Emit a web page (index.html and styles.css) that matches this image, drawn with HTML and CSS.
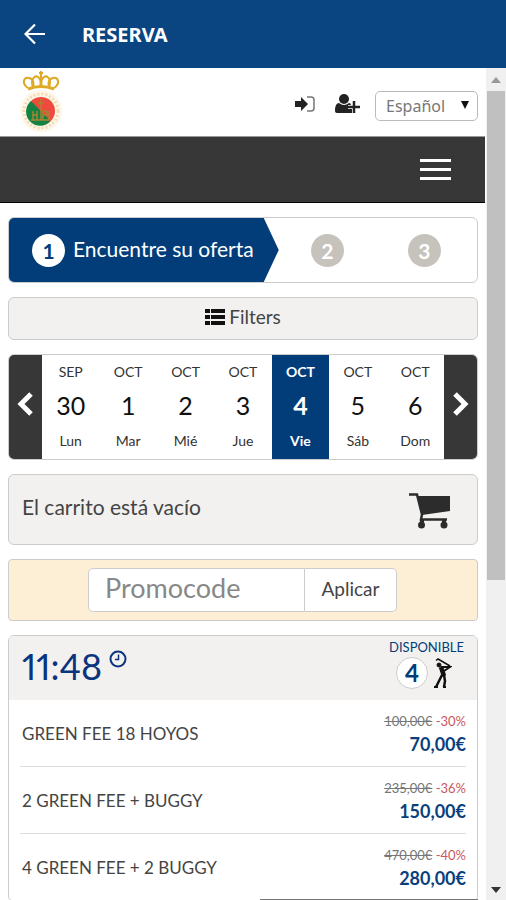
FILE: index.html
```html
<!DOCTYPE html>
<html lang="es">
<head>
    <meta charset="UTF-8">
    <meta name="viewport" content="width=device-width, initial-scale=1.0">
    <title>Reserva</title>
    <link rel="stylesheet" href="styles.css">
</head>
<body>
    <!-- App bar -->
    <header class="app-bar">
        <button class="back" aria-label="Volver">
            <svg width="22" height="22" viewBox="0 0 22 22" fill="none" stroke="currentColor" stroke-width="2.200"><path d="M21 11H2M11 1.500L1.500 11L11 20.500"/></svg>
        </button>
        <h1>RESERVA</h1>
    </header>

    <div class="view">
        <div class="page">
            <!-- Logo, login and language -->
            <div class="top">
                <a href="#" class="logo" aria-label="Inicio">
                    <svg width="42" height="62" viewBox="0 0 42 62">
                        <g fill="none" stroke="#dfaa23" stroke-width="2">
                            <path d="M8 17C1 12 4 6 9 7c5 1 5 6 4 9M34 17c7-5 4-11-1-10c-5 1-5 6-4 9"/>
                            <path d="M13 16C10 8 15 4 18 6c3 2 3 6 2 10M29 16c3-8-2-12-5-10c-3 2-3 6-2 10M21 0v15M19 2h4"/>
                            <path d="M8 18q13-5 26 0" stroke-width="3"/>
                        </g>
                        <circle cx="21" cy="40" r="21" fill="#fef7e8"/>
                        <circle cx="21" cy="40" r="17" fill="none" stroke="#f1dcb5" stroke-width="3" stroke-dasharray="2 2"/>
                        <circle cx="21" cy="40" r="14" fill="#ee4b3e"/>
                        <path d="M11 30A14 14 0 1 0 30.500 50Z" fill="#148243"/>
                        <path d="M21 28v21M18 32h6M13 40v9M17 40v9M13 44h4M23 49v-9h4v4h-4M29 40v9M11 49h19" fill="none" stroke="#a88432" stroke-width="1.500"/>
                    </svg>
                </a>
                <a href="#" class="top-link" aria-label="Entrar">
                    <svg width="20" height="16" viewBox="0 0 20 16"><path d="M0 5h6V1l7 7-7 7v-4H0Z" fill="#222"/><path d="M12 1h4q3 0 3 3v8q0 3-3 3h-4" fill="none" stroke="#777" stroke-width="1.500"/></svg>
                </a>
                <a href="#" class="top-link" aria-label="Registrarse">
                    <svg width="26" height="20" viewBox="0 0 26 20" fill="#222"><circle cx="9" cy="5" r="5"/><path d="M4 9q5 4 10 0q2 0 2 2v3h1v5H2q-2 0-2-2c0-4 1-8 4-8Z"/><path d="M19 6v13M13 13h12" stroke="#fff" stroke-width="4"/><path d="M19 7v12M13 13h12" stroke="#222" stroke-width="2.500"/></svg>
                </a>
                <div class="language">
                    <select aria-label="Idioma">
                        <option>Español</option>
                        <option>English</option>
                    </select>
                    <svg class="caret" width="8" height="8" viewBox="0 0 8 8"><path d="M0 0h8L4 8Z" fill="#111"/></svg>
                </div>
            </div>

            <nav class="menu">
                <button class="hamburger" aria-label="Menú"><span></span><span></span><span></span></button>
            </nav>

            <main class="content">
                <!-- Booking steps -->
                <div class="steps">
                    <div class="step active"><span class="circle">1</span><span class="step-text">Encuentre su oferta</span></div>
                    <div class="step"><span class="circle">2</span></div>
                    <div class="step"><span class="circle">3</span></div>
                </div>

                <button class="filters">
                    <svg width="20" height="16" viewBox="0 0 20 16" fill="#111"><path d="M0 0h5v4H0ZM0 6h5v4H0ZM0 12h5v4H0ZM6 0h14v4H6ZM6 6h14v4H6ZM6 12h14v4H6Z"/></svg>
                    Filters
                </button>

                <!-- Day picker -->
                <div class="days">
                    <button class="arrow" aria-label="Anterior"><svg width="18" height="26" viewBox="0 0 18 26"><path d="M14 3L4 13L14 23"/></svg></button>
                    <button class="day"><span>SEP</span><b>30</b><span>Lun</span></button>
                    <button class="day"><span>OCT</span><b>1</b><span>Mar</span></button>
                    <button class="day"><span>OCT</span><b>2</b><span>Mié</span></button>
                    <button class="day"><span>OCT</span><b>3</b><span>Jue</span></button>
                    <button class="day selected"><span>OCT</span><b>4</b><span>Vie</span></button>
                    <button class="day"><span>OCT</span><b>5</b><span>Sáb</span></button>
                    <button class="day"><span>OCT</span><b>6</b><span>Dom</span></button>
                    <button class="arrow" aria-label="Siguiente"><svg width="18" height="26" viewBox="0 0 18 26"><path d="M4 3L14 13L4 23"/></svg></button>
                </div>

                <div class="cart">
                    <span>El carrito está vacío</span>
                    <svg width="42" height="36" viewBox="0 0 42 36" fill="#2c2c2c"><path d="M8 3h33v15L13 22Z"/><path d="M0 1.500h8l5 20-1 5h26" fill="none" stroke="#2c2c2c" stroke-width="2.500"/><circle cx="12.500" cy="32" r="3.500"/><circle cx="35" cy="32" r="3.500"/><path d="M11 26h4v4h-4ZM33 26h4v4h-4Z"/></svg>
                </div>

                <form class="promo">
                    <input type="text" placeholder="Promocode" aria-label="Promocode">
                    <button type="button">Aplicar</button>
                </form>

                <!-- Tee time offer -->
                <section class="offer">
                    <div class="offer-head">
                        <h2>11:48
                            <svg width="18" height="18" viewBox="0 0 18 18" fill="none" stroke="currentColor"><circle cx="9" cy="9" r="7.500" stroke-width="2"/><path d="M9.500 4.500V9.500H6" stroke-width="1.500"/></svg>
                        </h2>
                        <div class="available">
                            <span>DISPONIBLE</span>
                            <div class="players">
                                <b>4</b>
                                <svg width="18" height="30" viewBox="0 0 18 30" fill="none" stroke="#111"><circle cx="5" cy="7" r="2" fill="#111"/><path d="M2 2.500L4 1L16 8" stroke-width="1.500"/><path d="M7 9L16 9L10 13" stroke-width="2"/><path d="M7 9L10 18" stroke-width="4.500"/><path d="M8 17L5 23L2 29M10 17L11 23L10 29" stroke-width="2.500"/><path d="M0 29h4M9 29h3" stroke-width="2"/></svg>
                            </div>
                        </div>
                    </div>
                    <ul class="rates">
                        <li><a href="#">GREEN FEE 18 HOYOS</a><div class="price"><small><s>100,00€</s> <em>-30%</em></small><strong>70,00€</strong></div></li>
                        <li><a href="#">2 GREEN FEE + BUGGY</a><div class="price"><small><s>235,00€</s> <em>-36%</em></small><strong>150,00€</strong></div></li>
                        <li><a href="#">4 GREEN FEE + 2 BUGGY</a><div class="price"><small><s>470,00€</s> <em>-40%</em></small><strong>280,00€</strong></div></li>
                    </ul>
                </section>
            </main>
            <div class="status-edge"></div>
        </div>

        <!-- Scroll bar -->
        <div class="scrollbar">
            <svg width="10" height="6" viewBox="0 0 10 6"><path d="M0 6L5 0L10 6Z" fill="#999"/></svg>
            <div class="track"><div class="thumb"></div></div>
            <svg width="10" height="6" viewBox="0 0 10 6"><path d="M0 0L5 6L10 0Z" fill="#333"/></svg>
        </div>
    </div>
</body>
</html>
```
FILE: styles.css
```css
* {
    box-sizing: border-box;
}
body {
    font-family: Lato, "Liberation Sans", sans-serif;
    margin: 0;
    height: 100vh;
    display: flex;
    flex-direction: column;
    overflow: hidden;
    background: white;
    color: #444;
}
button {
    font-family: inherit;
    color: inherit;
    border: none;
    padding: 0;
    background: none;
    cursor: pointer;
}
a {
    color: inherit;
    text-decoration: none;
}
svg {
    display: block;
}

/* App bar */
.app-bar {
    display: flex;
    flex: none;
    align-items: center;
    gap: 36px;
    height: 68px;
    padding: 0 24px;
    background: #0a4481;
    color: white;
}
.app-bar h1 {
    margin: 0;
    font: bold 20px "Noto Sans", sans-serif;
}
.view {
    display: flex;
    flex: 1;
    min-height: 0;
}
.page {
    position: relative;
    flex: 1;
    min-width: 0;
    overflow: hidden;
}

/* Top row */
.top {
    display: flex;
    align-items: center;
    height: 69px;
    padding: 4px 7px 4px 20px;
    border-bottom: 1px solid #999;
}
.logo {
    margin-right: auto;
}
.top-link {
    margin-top: 4px;
    margin-right: 20px;
}
.top-link + .top-link {
    margin-right: 14px;
}
.language {
    position: relative;
    margin-top: 7px;
}
.language select {
    appearance: none;
    width: 103px;
    height: 30px;
    padding: 0 10px;
    border: 1px solid #bbb;
    border-radius: 5px;
    background: white;
    color: #777;
    font: 16px "Noto Sans", sans-serif;
}
.caret {
    position: absolute;
    right: 9px;
    top: 10px;
    pointer-events: none;
}
.menu {
    display: flex;
    justify-content: flex-end;
    padding: 22px 34px;
    background: #373737;
    border-bottom: 1px solid black;
}
.hamburger {
    display: grid;
    gap: 6px;
    width: 31px;
}
.hamburger span {
    height: 3px;
    background: white;
}

.content {
    display: flex;
    flex-direction: column;
    gap: 14px;
    padding: 14px 7px 14px 8px;
}

/* Steps */
.steps {
    display: flex;
    height: 66px;
    padding-right: 4px;
    border: 1px solid #ccc;
    border-radius: 6px;
    overflow: hidden;
}
.step {
    display: flex;
    flex: 1;
    align-items: center;
    justify-content: center;
    gap: 8px;
    font-size: 21px;
}
.step.active {
    flex: none;
    padding: 0 25px 0 23px;
    background: #023d7a;
    color: white;
    clip-path: polygon(0 0, calc(100% - 15px) 0, 100% 50%, calc(100% - 15px) 100%, 0 100%);
}
.step-text {
    padding-bottom: 4px;
}
.circle {
    width: 33px;
    line-height: 33px;
    border-radius: 50%;
    background: #c5c3bc;
    color: white;
    text-align: center;
    font-weight: bold;
}
.active .circle {
    background: white;
    color: #023d7a;
}

.filters {
    display: flex;
    align-items: center;
    justify-content: center;
    gap: 4px;
    height: 43px;
    padding-bottom: 4px;
    border: 1px solid #ccc;
    border-radius: 6px;
    background: #f2f1f0;
    font-size: 19px;
}

/* Day picker */
.days {
    display: flex;
    height: 106px;
    border: 1px solid #ccc;
    border-radius: 6px;
    overflow: hidden;
}
.arrow {
    display: grid;
    place-items: center;
    width: 33px;
    padding-bottom: 6px;
    background: #373737;
}
.arrow path {
    fill: none;
    stroke: white;
    stroke-width: 5px;
}
.day {
    display: grid;
    flex: 1;
    grid-template-rows: 32px 36px 34px;
    align-items: center;
    padding-bottom: 3px;
    color: #333;
    font-size: 14px;
}
.day b {
    color: #111;
    font-size: 25px;
    font-weight: normal;
}
.day.selected, .day.selected b {
    background: #023d7a;
    color: white;
    font-weight: bold;
}

.cart {
    display: flex;
    align-items: center;
    justify-content: space-between;
    height: 71px;
    padding: 0 26px 6px 13px;
    border: 1px solid #ccc;
    border-radius: 6px;
    background: #f2f1f0;
    font-size: 21px;
}
.cart svg {
    margin-top: 8px;
}

/* Promo code */
.promo {
    display: flex;
    justify-content: center;
    padding: 8px 80px 8px 79px;
    border: 1px solid #ccc;
    border-radius: 4px;
    background: #fdefd5;
}
.promo input {
    flex: 1;
    min-width: 0;
    height: 44px;
    padding: 0 16px 6px;
    border: 1px solid #ccc;
    border-radius: 5px 0 0 5px;
    font: 27px Lato, sans-serif;
}
.promo input::placeholder {
    color: #888;
}
.promo button {
    width: 92px;
    padding-bottom: 4px;
    border: 1px solid #ccc;
    border-left: none;
    border-radius: 0 5px 5px 0;
    background: white;
    font-size: 19px;
}

/* Offer */
.offer {
    border: 1px solid #ccc;
    border-radius: 6px;
    overflow: hidden;
}
.offer-head {
    display: flex;
    justify-content: space-between;
    height: 64px;
    padding: 3px 13px;
    background: #f2f1f0;
    color: #023d7a;
}
.offer-head h2 {
    display: flex;
    gap: 7px;
    margin: 0;
    font-size: 36px;
    font-weight: normal;
    font-variant-numeric: proportional-nums;
    line-height: 54px;
    color: #0a347d;
}
.offer-head h2 svg {
    margin-top: 11px;
}
.available {
    font-size: 13px;
    line-height: 16px;
}
.players {
    display: flex;
    align-items: center;
    gap: 6px;
    padding: 2px 7px;
}
.players b {
    width: 32px;
    border: 1px solid #ccc;
    border-radius: 50%;
    background: white;
    font-size: 24px;
    line-height: 30px;
    text-align: center;
}
.rates {
    margin: 0;
    padding: 0 11px;
    list-style: none;
}
.rates li {
    display: flex;
    align-items: center;
    justify-content: space-between;
    height: 67px;
    padding-left: 2px;
    border-bottom: 1px solid #ddd;
    font-size: 17px;
}
.price {
    text-align: right;
}
.price small {
    display: block;
    font-size: 13px;
    line-height: 21px;
    color: #777;
}
.price em {
    font-style: normal;
    color: #c9595e;
}
.price strong {
    display: block;
    font-size: 18px;
    line-height: 24px;
    color: #0a3f7d;
}
.status-edge {
    position: absolute;
    right: 7px;
    bottom: 0;
    width: 45%;
    height: 1px;
    background: #777;
}

/* Scroll bar */
.scrollbar {
    display: flex;
    flex-direction: column;
    align-items: center;
    gap: 8px;
    width: 21px;
    padding: 9px 1px 7px;
    background: #f0f0f0;
    border-left: 1px solid white;
}
.track {
    flex: 1;
    width: 100%;
}
.thumb {
    height: 62%;
    background: #c0c0c0;
}
```
